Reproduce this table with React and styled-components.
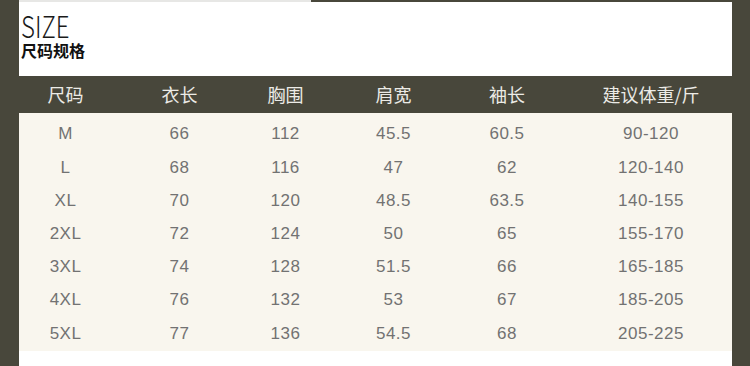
import React from "react";
import styled, { createGlobalStyle } from "styled-components";

const Global = createGlobalStyle`
  html, body { margin: 0; padding: 0; }
  body { background: #48473b; width: 750px; height: 366px; overflow: hidden; }
`;

const Page = styled.div`
  width: 750px;
  height: 366px;
  box-sizing: border-box;
  padding: 0 18px 0 19px;
  background: #48473b;
  display: flex;
  flex-direction: column;
`;

const TopStrip = styled.div`
  height: 2px;
  display: flex;
  margin-right: -18px;
`;

const StripLight = styled.div`
  width: 292px;
  background: #e7e7e5;
`;

const TitleBlock = styled.div`
  height: 74px;
  background: #ffffff;
  box-sizing: border-box;
  padding: 7.7px 0 0 2px;
  display: flex;
  flex-direction: column;
  align-items: flex-start;
`;

const Title = styled.div`
  font-family: "Noto Sans CJK SC", sans-serif;
  font-weight: 300;
  font-size: 30px;
  line-height: 30px;
  height: 30px;
  color: #1a1a1a;
  transform: scaleX(0.8);
  transform-origin: left center;
`;

const Subtitle = styled.div`
  font-family: "Noto Sans CJK SC", sans-serif;
  font-weight: 700;
  font-size: 16px;
  line-height: 20px;
  color: #111;
`;

const Grid = styled.div`
  display: grid;
  grid-template-columns: 93px 135px 77px 139px 88px 1fr;
`;

const HeaderRow = styled(Grid)`
  height: 37px;
  align-items: center;
`;

const HeadCell = styled.div`
  text-align: center;
  font-family: "Noto Sans CJK SC", sans-serif;
  font-weight: 400;
  font-size: 18px;
  line-height: 37px;
  color: #ecebe6;
  padding-left: ${(p) => (p.$last ? "19px" : "0")};
`;

const Body = styled.div`
  height: 238px;
  box-sizing: border-box;
  background: #f9f6ee;
  padding-top: 4.4px;
`;

const Row = styled(Grid)`
  height: 33.2px;
  align-items: center;
`;

const Cell = styled.div`
  text-align: center;
  font-family: "Liberation Sans", Arial, sans-serif;
  font-size: 17px;
  line-height: 33px;
  letter-spacing: 0.5px;
  color: #727272;
  padding-left: ${(p) => (p.$last ? "19px" : "0")};
`;

const Footer = styled.div`
  height: 15px;
  background: #ffffff;
`;

const headers = ["尺码", "衣长", "胸围", "肩宽", "袖长", "建议体重/斤"];
const rows = [
  ["M", "66", "112", "45.5", "60.5", "90-120"],
  ["L", "68", "116", "47", "62", "120-140"],
  ["XL", "70", "120", "48.5", "63.5", "140-155"],
  ["2XL", "72", "124", "50", "65", "155-170"],
  ["3XL", "74", "128", "51.5", "66", "165-185"],
  ["4XL", "76", "132", "53", "67", "185-205"],
  ["5XL", "77", "136", "54.5", "68", "205-225"],
];

export default function App() {
  return (
    <>
      <Global />
      <Page>
        <TopStrip>
          <StripLight />
        </TopStrip>
        <TitleBlock>
          <Title>SIZE</Title>
          <Subtitle>尺码规格</Subtitle>
        </TitleBlock>
        <HeaderRow>
          {headers.map((h, i) => (
            <HeadCell key={h} $last={i === headers.length - 1}>
              {h}
            </HeadCell>
          ))}
        </HeaderRow>
        <Body>
          {rows.map((r) => (
            <Row key={r[0]}>
              {r.map((c, i) => (
                <Cell key={i} $last={i === r.length - 1}>
                  {c}
                </Cell>
              ))}
            </Row>
          ))}
        </Body>
        <Footer />
      </Page>
    </>
  );
}
